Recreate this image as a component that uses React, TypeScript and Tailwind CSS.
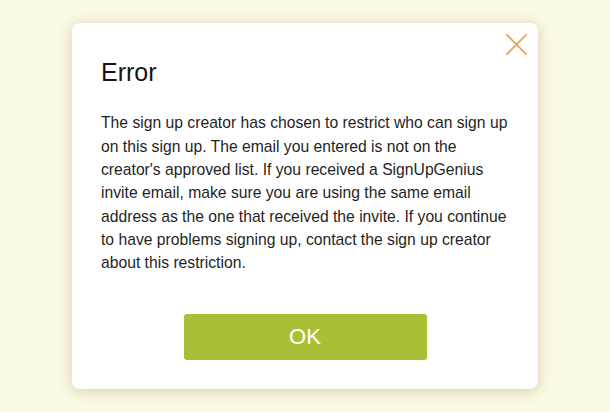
import React from "react";

const lines = [
  "The sign up creator has chosen to restrict who can sign up",
  "on this sign up. The email you entered is not on the",
  "creator's approved list. If you received a SignUpGenius",
  "invite email, make sure you are using the same email",
  "address as the one that received the invite. If you continue",
  "to have problems signing up, contact the sign up creator",
  "about this restriction.",
];

const App: React.FC = () => {
  return (
    <div className="w-[610px] h-[412px] bg-[#fbf9e3] flex items-center justify-center font-['Liberation_Sans',Arial,sans-serif]">
      {/* Dialog */}
      <div className="relative w-[466px] bg-white rounded-lg shadow-[0_2px_14px_rgba(110,100,40,0.28)] pt-[35px] pb-[29px] px-[29px]">
        <button className="absolute right-[10px] top-[10px] w-[23px] h-[23px] text-[#f0a048]">
          <svg viewBox="0 0 24 24" className="w-full h-full" fill="none" stroke="currentColor" strokeWidth="1.8" strokeLinecap="round">
            <path d="M2 2L22 22M22 2L2 22" />
          </svg>
        </button>

        <h2 className="text-[25px] leading-[28px] text-[#161616]">Error</h2>

        <p className="mt-[25px] text-[15.7px] leading-[23.35px] text-[#1f1f1f] whitespace-nowrap">
          {lines.map((l, i) => (
            <React.Fragment key={i}>
              {l}
              {i < lines.length - 1 && <br />}
            </React.Fragment>
          ))}
        </p>

        <div className="flex justify-center mt-[39px]">
          <button className="w-[243px] h-[46px] bg-[#abbf36] rounded-[3px] text-white text-[22px]">OK</button>
        </div>
      </div>
    </div>
  );
};

export default App;
